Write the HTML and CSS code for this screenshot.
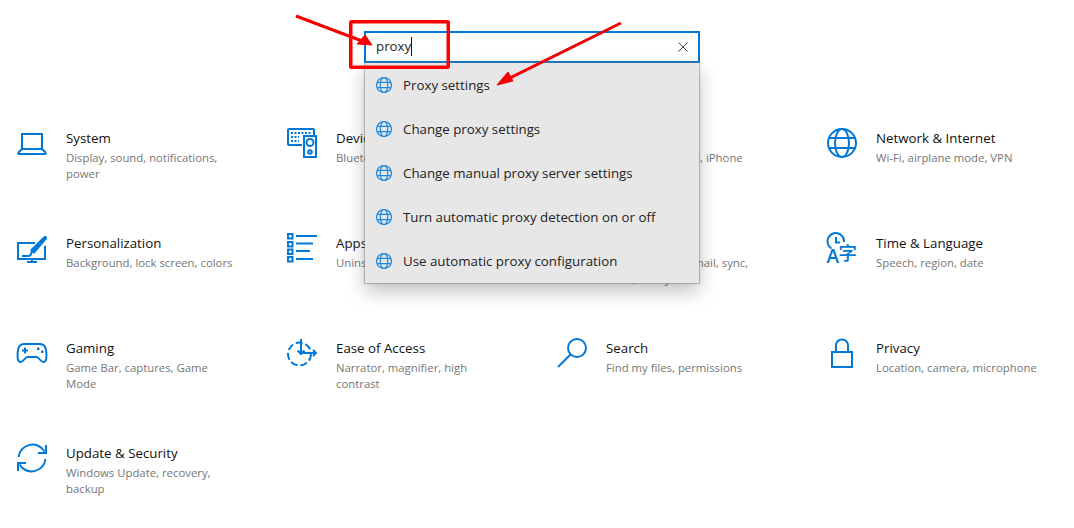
FILE: index.html
```html
<!DOCTYPE html>
<html lang="en">
<head>
<meta charset="utf-8">
<title>Settings</title>
<link rel="stylesheet" href="styles.css">
</head>
<body>
<svg class="defs" width="0" height="0" aria-hidden="true">
  <symbol id="globe" viewBox="0 0 30 30">
    <circle cx="15" cy="15" r="14"/>
    <ellipse cx="15" cy="15" rx="7" ry="14"/>
    <path d="M2 10h26M2 20h26"/>
  </symbol>
</svg>

<main class="grid">
  <section class="tile">
    <svg class="icon" viewBox="0 0 30 30"><path d="M5 21V6h20v15"/><path d="M5 21h20l3.500 3.500q1 1.500-1 1.500H2.500q-2 0-1-1.500z"/></svg>
    <div><h2>System</h2><p>Display, sound, notifications, power</p></div>
  </section>
  <section class="tile">
    <svg class="icon" viewBox="0 0 30 30"><path d="M15 17H2q-1 0-1-1V2q0-1 1-1h24q1 0 1 1v5"/><path class="thin" d="M4 5h20M4 9h8M4 13h8"/><rect x="17" y="8" width="12" height="21"/><circle cx="23" cy="14.500" r="3.500"/><circle cx="23" cy="24" r="1.800"/></svg>
    <div><h2>Devices</h2><p>Bluetooth, printers, mouse</p></div>
  </section>
  <section class="tile">
    <svg class="icon" viewBox="0 0 30 30"><rect x="7" y="2" width="16" height="26" rx="2"/></svg>
    <div><h2>Phone</h2><p>Link your Android, iPhone</p></div>
  </section>
  <section class="tile">
    <svg class="icon" viewBox="0 0 30 30"><use href="#globe"/></svg>
    <div><h2>Network &amp; Internet</h2><p>Wi-Fi, airplane mode, VPN</p></div>
  </section>

  <section class="tile">
    <svg class="icon" viewBox="0 0 30 30"><path d="M18 10H1v16h27V13"/><path d="M10 29h10M15 26v3"/><path class="brush" d="M14.500 17L27 4.500q2-1.500 2 1L17 19.500z"/><path d="M5 23h7q3-1 2.500-5"/></svg>
    <div><h2>Personalization</h2><p>Background, lock screen, colors</p></div>
  </section>
  <section class="tile">
    <svg class="icon" viewBox="0 0 30 30"><rect x="1" y="1" width="4.500" height="4.500"/><rect x="1" y="9" width="4.500" height="4.500"/><rect x="1" y="16.500" width="4.500" height="4.500"/><rect x="1" y="24" width="4.500" height="4.500"/><path d="M9 3h21M9 10.500h17M9 18h14M9 26h17"/></svg>
    <div><h2>Apps</h2><p>Uninstall, defaults, optional</p></div>
  </section>
  <section class="tile">
    <svg class="icon" viewBox="0 0 30 30"><circle cx="15" cy="9" r="7"/><path d="M3 28c1-7 6-10 12-10s11 3 12 10"/></svg>
    <div><h2>Accounts</h2><p>Your accounts, email, sync, work, family</p></div>
  </section>
  <section class="tile">
    <svg class="icon" viewBox="0 0 30 30"><path d="M4.500 15.500A8.300 8.300 0 1 1 17 9"/><path d="M9 4v5.500h4"/><text class="glyph latin" x="-.5" y="29.500">A</text><text class="glyph cjk" x="11.500" y="26.500">字</text></svg>
    <div><h2>Time &amp; Language</h2><p>Speech, region, date</p></div>
  </section>

  <section class="tile">
    <svg class="icon" viewBox="0 0 30 30"><path d="M7 6h16c4 0 6 3 6.300 8s.5 10-3 10c-3 0-4-5-7-5h-8.600c-3 0-4 5-7 5-3.500 0-3.300-5-3-10S3 6 7 6z"/><path d="M5 12.500h6M8 9.500v6"/><path class="dot" d="M20 9.500h2.500v2.500H20zM24 12.500h2.500V15H24z"/></svg>
    <div><h2>Gaming</h2><p>Game Bar, captures, Game Mode</p></div>
  </section>
  <section class="tile">
    <svg class="icon" viewBox="0 0 30 30"><circle class="dash" cx="12.500" cy="16" r="11.500"/><path d="M14 1v15M10.500 12.500L14 16l3.500-3.500M14 15h15M26 12l3 3-3 3"/></svg>
    <div><h2>Ease of Access</h2><p>Narrator, magnifier, high contrast</p></div>
  </section>
  <section class="tile">
    <svg class="icon" viewBox="0 0 30 30"><circle cx="20" cy="10" r="9"/><path d="M13.500 16.500L1 29"/></svg>
    <div><h2>Search</h2><p>Find my files, permissions</p></div>
  </section>
  <section class="tile">
    <svg class="icon" viewBox="0 0 30 30"><rect x="5" y="14" width="20" height="15"/><path d="M9 14V7.500a6 6 0 0 1 12 0V14"/></svg>
    <div><h2>Privacy</h2><p>Location, camera, microphone</p></div>
  </section>

  <section class="tile">
    <svg class="icon" viewBox="0 0 30 30"><path d="M1.500 14A14 14 0 0 1 27.500 8.500"/><path d="M29 2v8h-8"/><path d="M28.500 16A14 14 0 0 1 2.500 21.500"/><path d="M1 28v-8h8"/></svg>
    <div><h2>Update &amp; Security</h2><p>Windows Update, recovery, backup</p></div>
  </section>
</main>

<div class="search">
  <div class="field"><span class="query">proxy</span><span class="caret"></span>
    <svg class="clear" viewBox="0 0 10 10"><path d="M.5.500l9 9M9.500.500l-9 9"/></svg>
  </div>
  <ul class="results">
    <li><svg class="small"><use href="#globe"/></svg>Proxy settings</li>
    <li><svg class="small"><use href="#globe"/></svg>Change proxy settings</li>
    <li><svg class="small"><use href="#globe"/></svg>Change manual proxy server settings</li>
    <li><svg class="small"><use href="#globe"/></svg>Turn automatic proxy detection on or off</li>
    <li><svg class="small"><use href="#globe"/></svg>Use automatic proxy configuration</li>
  </ul>
</div>

<svg class="markup" viewBox="0 0 1074 528" aria-hidden="true">
  <rect class="box" x="350.750" y="21.750" width="97.500" height="45.500" rx="1"/>
  <path class="line" d="M296 16L362 41"/>
  <path class="head" d="M372 45L365 35L357 44z"/>
  <path class="line" d="M621 23L508 79"/>
  <path class="head" d="M497 85L508 72L513 81z"/>
</svg>
</body>
</html>
```

FILE: styles.css
```css
* { box-sizing: border-box; }
html, body { margin: 0; height: 528px; overflow: hidden; background: #fff; }
body { position: relative; font-family: "Open Sans", "Noto Sans", "Liberation Sans", sans-serif; color: #1a1a1a; }
.defs { position: absolute; }
.grid {
  display: grid;
  grid-template-columns: repeat(4, 270px);
  grid-auto-rows: 105px;
  padding: 128px 0 0 17px;
}
.tile { display: flex; gap: 19px; align-items: flex-start; }
.tile h2 { margin: 0 0 2px; font-size: 13.300px; font-weight: 400; line-height: 20px; color: #111; }
.tile p { margin: 0; width: 170px; font-size: 11.350px; line-height: 16px; color: #767676; }
.icon { flex: none; width: 30px; height: 30px; fill: none; stroke: #0078d7; stroke-width: 2; overflow: visible; }
.icon .thin { stroke-dasharray: 2 1.500; }
.icon .dot { fill: #0078d7; stroke: none; }
.icon .dash { stroke-dasharray: 7 3; }
.icon .brush { fill: #0078d7; }
.icon .glyph { fill: #0078d7; stroke: none; }
.icon .latin { font: 600 19px "Open Sans", sans-serif; }
.icon .cjk { font: 500 18.500px "Noto Sans CJK SC", sans-serif; }
.search { position: absolute; left: 364px; top: 31px; width: 336px; }
.field {
  display: flex; align-items: center; height: 32px; padding: 0 10px 2px;
  background: #fff; border: 2px solid #0078d7;
  font-size: 13.300px; color: #222;
}
.caret { width: 1px; height: 19px; background: #111; }
.clear { width: 10px; height: 10px; margin: 2px 0 0 auto; fill: none; stroke: #444; stroke-width: 1; }
.results {
  list-style: none; margin: 0 1px; padding: 0;
  background: #e7e7e7;
  box-shadow: 0 0 1px 1px rgba(120,120,120,.45), 0 8px 18px rgba(0,0,0,.25);
}
.results li { display: flex; align-items: center; gap: 11px; height: 44px; padding-left: 11px; font-size: 13.300px; color: #222; }
.small { flex: none; width: 16px; height: 16px; fill: none; stroke: #1e86dc; stroke-width: 2.200; }
.markup { position: absolute; left: 0; top: 0; width: 1074px; height: 528px; pointer-events: none; }
.box { fill: none; stroke: #ff0000; stroke-width: 3.500; }
.line { fill: none; stroke: #f40000; stroke-width: 3; }
.head { fill: #f40000; stroke: #f40000; stroke-width: 1; }
```
